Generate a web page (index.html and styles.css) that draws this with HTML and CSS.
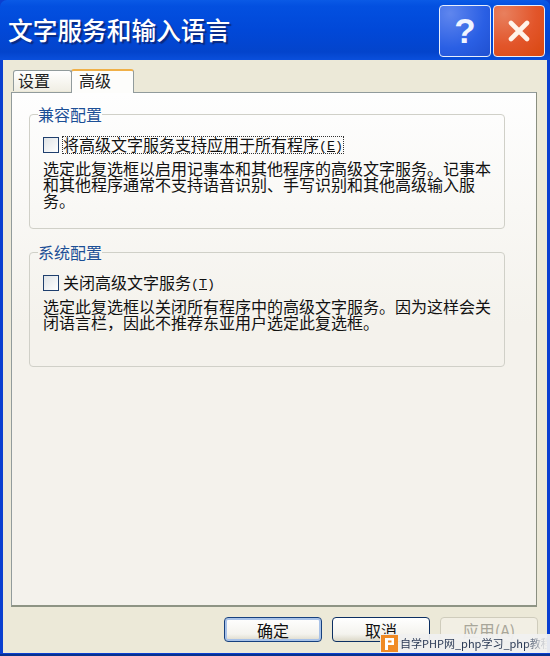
FILE: index.html
```html
<!DOCTYPE html>
<html lang="zh-CN">
<head>
<meta charset="utf-8">
<title>文字服务和输入语言</title>
<link rel="stylesheet" href="styles.css">
</head>
<body>
<div class="window">
  <header class="titlebar">
    <h1 class="title">文字服务和输入语言</h1>
    <div class="controls">
      <button class="ctl ctl-help" type="button">?</button>
      <button class="ctl ctl-close" type="button" aria-label="关闭">
        <svg width="24" height="24" viewBox="0 0 24 24"><path d="M4 4 L20 20 M20 4 L4 20" stroke="#fff3ea" stroke-width="4.6" stroke-linecap="round"/></svg>
      </button>
    </div>
  </header>
  <div class="client">
    <div class="tabs">
      <div class="tab">设置</div>
      <div class="tab tab-active">高级</div>
    </div>
    <main class="panel">
      <fieldset class="group group-first">
        <legend class="legend">兼容配置</legend>
        <div class="check">
          <span class="box"></span>
          <span class="label label-focus">将高级文字服务支持应用于所有程序<span class="hotkey">(<u>E</u>)</span></span>
        </div>
        <p class="desc">选定此复选框以启用记事本和其他程序的高级文字服务。记事本和其他程序通常不支持语音识别、手写识别和其他高级输入服务。</p>
      </fieldset>
      <fieldset class="group">
        <legend class="legend">系统配置</legend>
        <div class="check">
          <span class="box"></span>
          <span class="label">关闭高级文字服务<span class="hotkey">(<u>T</u>)</span></span>
        </div>
        <p class="desc">选定此复选框以关闭所有程序中的高级文字服务。因为这样会关闭语言栏，因此不推荐东亚用户选定此复选框。</p>
      </fieldset>
    </main>
    <footer class="actions">
      <button class="btn btn-default" type="button">确定</button>
      <button class="btn" type="button">取消</button>
      <button class="btn btn-disabled" type="button">应用(A)</button>
    </footer>
  </div>
</div>
<div class="watermark">
  <svg class="wm-logo" width="17" height="17" viewBox="0 0 17 17"><rect width="17" height="17" fill="#f08a24"/><path d="M4 3 H13 V10 H7 V15 H4 Z M7 5.5 V7.5 H10.5 V5.5 Z" fill="#fff" fill-rule="evenodd"/></svg>
  <span class="wm-text">自学PHP网_php学习_php教程</span>
</div>
</body>
</html>
```

FILE: styles.css
```css
* { box-sizing: border-box; }
html, body { margin: 0; padding: 0; }
body {
  width: 550px;
  height: 656px;
  overflow: hidden;
  position: relative;
  font-family: "Noto Sans CJK SC", "Liberation Sans", sans-serif;
  font-size: 16px;
  color: #111;
  background: #ece9d8;
}
.window {
  width: 550px;
  height: 656px;
  display: flex;
  flex-direction: column;
  background: #0a3fd0;
  border-bottom: 2px solid #06318f;
  padding-bottom: 1px;
}
.titlebar {
  height: 60px;
  flex: none;
  display: flex;
  justify-content: space-between;
  padding: 5px 5px 0 8px;
  border-radius: 7px 7px 0 0;
  background: linear-gradient(#0a5ae6 0, #0350e0 6px, #0148d8 30px, #0344cc 52px, #0a4fdc 60px);
}
.title {
  margin: 4px 0 0;
  font-size: 24.7px;
  line-height: 40px;
  font-weight: 500;
  color: #fff;
  text-shadow: 2px 2px 1px #0a2a80;
}
.controls { display: flex; gap: 2px; }
.ctl {
  width: 52px;
  height: 52px;
  padding: 0;
  border: 1px solid #e8eefc;
  border-radius: 4px;
  display: flex;
  align-items: center;
  justify-content: center;
  font-family: "Liberation Sans", sans-serif;
}
.ctl-help {
  background: radial-gradient(circle at 20% 15%, #5f86ee, #2a5fe4 60%, #2050d0);
  color: #f0f4ff;
  font-size: 35px;
  font-weight: 700;
}
.ctl-close { background: radial-gradient(circle at 20% 15%, #e8805e, #e2552a 55%, #d9470f); }
.client {
  flex: 1;
  min-height: 0;
  margin: 0 3px;
  background: #ece9d8;
  padding: 8px 8px 0 8px;
  display: flex;
  flex-direction: column;
}
.tabs {
  height: 24px;
  flex: none;
  display: flex;
  align-items: flex-end;
  padding-left: 2px;
  position: relative;
  z-index: 1;
}
.tab {
  width: 59px;
  height: 21px;
  line-height: 18px;
  padding-left: 4px;
  background: linear-gradient(#fff, #f0eee4);
  border: 1px solid #919b9c;
  border-bottom: 0;
  border-radius: 3px 3px 0 0;
  margin-bottom: 1px;
  color: #222;
}
.tab-active {
  width: 63px;
  height: 24px;
  line-height: 19px;
  padding-left: 7px;
  margin-left: -1px;
  margin-bottom: -1px;
  background: #fdfdfb;
  border-top: 2px solid #f0b048;
}
.panel {
  flex: none;
  height: 515px;
  width: 526px;
  border: 1px solid #919b9c;
  border-right-color: #8a8f80;
  border-bottom: 2px solid #8e9484;
  background: linear-gradient(#fefefe, #f4f2ec 45%, #f4f2ec);
  padding: 14px 31px 0 17px;
}
.group {
  margin: 0;
  padding: 15px 13px 0 13px;
  height: 122px;
  border: 1px solid #d0d0c8;
  border-radius: 4px;
  min-width: 0;
}
.group-first { margin-bottom: 16px; }
.legend {
  padding: 0;
  margin-left: -5px;
  color: #1c4f96;
  line-height: 14px;
}
.check {
  display: flex;
  align-items: center;
  height: 18px;
}
.box {
  width: 16px;
  height: 16px;
  border: 1px solid #1f3f6e;
  background: linear-gradient(135deg, #dfe3e6, #fff);
  margin-right: 3px;
  flex: none;
}
.label {
  height: 18px;
  line-height: 17px;
  padding: 0 1px;
  white-space: nowrap;
}
.label-focus { outline: 1px dotted #333; outline-offset: -1px; }
.hotkey {
  font-family: "Liberation Mono", monospace;
  font-size: 13.33px;
  position: relative;
  top: -1px;
}
.desc {
  margin: 6px 0 0;
  line-height: 16px;
  width: 450px;
  color: #111;
}
.actions {
  display: flex;
  justify-content: flex-end;
  gap: 10px;
  padding: 10px 1px 0 0;
}
.btn {
  width: 98px;
  height: 25px;
  padding: 0;
  font: inherit;
  line-height: 22px;
  color: #111;
  border: 1px solid #0c2f62;
  border-radius: 4px;
  background: linear-gradient(#fff, #f4f3ee 70%, #dcd8c8);
}
.btn-default {
  border-color: #16407e;
  box-shadow: inset 0 0 0 2px #a8c2e8;
}
.btn-disabled {
  color: #a8a69a;
  border-color: #cfccbc;
  background: #f2efe4;
}
.watermark {
  position: absolute;
  left: 380px;
  top: 634px;
  width: 170px;
  height: 19px;
  background: rgba(240, 240, 240, 0.95);
  display: flex;
  align-items: center;
  gap: 2px;
  padding-left: 1px;
  white-space: nowrap;
}
.wm-logo { flex: none; }
.wm-text {
  font-family: "Noto Sans CJK SC", sans-serif;
  font-size: 11px;
  line-height: 19px;
  color: #2b3a55;
  -webkit-mask-image: linear-gradient(to right, #000 82%, transparent 97%);
  mask-image: linear-gradient(to right, #000 82%, transparent 97%);
}
```
